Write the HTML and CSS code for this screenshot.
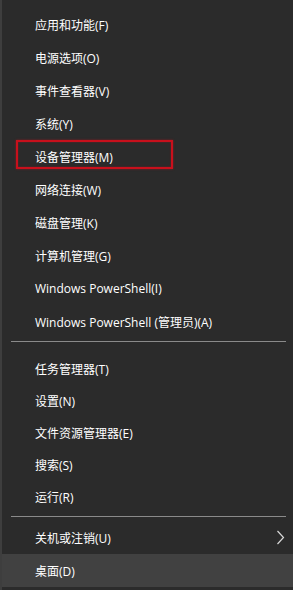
FILE: index.html
```html
<!DOCTYPE html>
<html lang="zh-CN">
<head>
<meta charset="utf-8">
<link rel="stylesheet" href="styles.css">
</head>
<body>
<div class="menu">
  <ul class="group g1">
    <li class="item">应用和功能(F)</li>
    <li class="item">电源选项(O)</li>
    <li class="item">事件查看器(V)</li>
    <li class="item">系统(Y)</li>
    <li class="item marked">设备管理器(M)</li>
    <li class="item">网络连接(W)</li>
    <li class="item">磁盘管理(K)</li>
    <li class="item">计算机管理(G)</li>
    <li class="item">Windows PowerShell(I)</li>
    <li class="item">Windows PowerShell (管理员)(A)</li>
  </ul>
  <div class="sep sep1"></div>
  <ul class="group g2">
    <li class="item">任务管理器(T)</li>
    <li class="item">设置(N)</li>
    <li class="item">文件资源管理器(E)</li>
    <li class="item">搜索(S)</li>
    <li class="item">运行(R)</li>
  </ul>
  <div class="sep sep2"></div>
  <ul class="group g3">
    <li class="item sub"><span>关机或注销(U)</span>
      <svg class="chev" width="9" height="15" viewBox="0 0 9 15"><polyline points="1.5,1 7.5,7.5 1.5,14" fill="none" stroke="#d8d8d8" stroke-width="1.2"/></svg>
    </li>
    <li class="item active">桌面(D)</li>
  </ul>
</div>
</body>
</html>
```
FILE: styles.css
```css
html, body {
  margin: 0;
  padding: 0;
  background: #2b2b2b;
}
.menu {
  width: 293px;
  height: 590px;
  box-sizing: border-box;
  background: #2b2b2b;
  border-left: 2px solid #3e3e3e;
  padding-top: 8px;
  font-family: "Open Sans", "Noto Sans CJK SC", sans-serif;
  font-size: 12px;
  color: #ffffff;
}
.group {
  list-style: none;
  margin: 0;
  padding: 0;
}
.item {
  position: relative;
  display: flex;
  align-items: center;
  justify-content: space-between;
  height: 33px;
  padding-left: 33px;
  padding-right: 8px;
  box-sizing: border-box;
}
.g2 .item {
  height: 32px;
}
.sep {
  height: 1px;
  background: #8a8a8a;
  margin-left: 9px;
  margin-right: 7px;
}
.sep1 {
  margin-top: 3px;
  margin-bottom: 11px;
}
.sep2 {
  margin-top: 3px;
  margin-bottom: 4px;
}
.active {
  background: #414141;
}
.marked::after {
  content: "";
  position: absolute;
  left: 14px;
  top: 0;
  width: 153px;
  height: 25px;
  border: 2px solid #c8101c;
  box-shadow: 0 0 2px rgba(200, 16, 28, 0.6), inset 0 0 2px rgba(200, 16, 28, 0.5);
}
.chev {
  display: block;
}
```
